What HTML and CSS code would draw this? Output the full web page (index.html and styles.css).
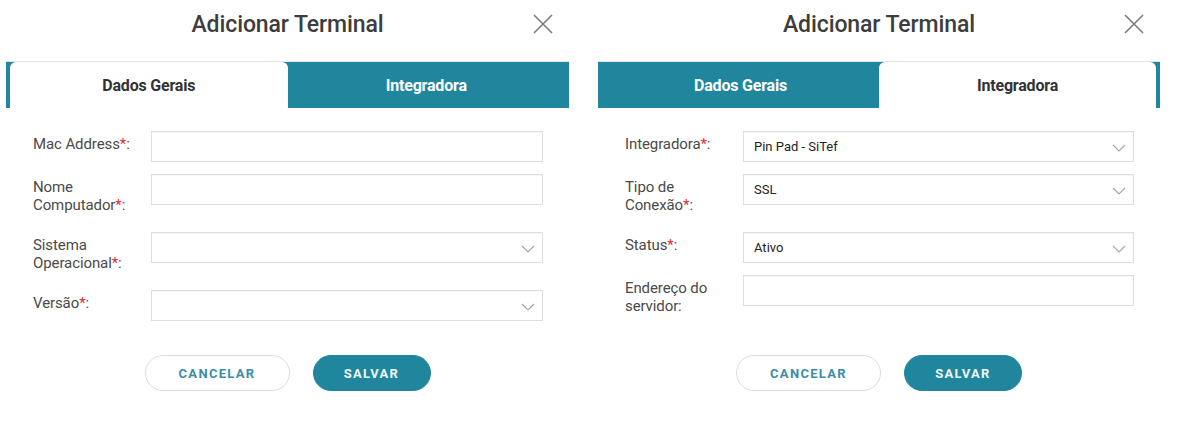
FILE: index.html
```html
<!DOCTYPE html>
<html lang="pt">
<head>
<meta charset="utf-8">
<link rel="stylesheet" href="styles.css">
</head>
<body>
<div class="page">
  <section class="dialog">
    <header class="dlg-head">
      <h1 class="dlg-title">Adicionar Terminal</h1>
      <button class="close" aria-label="Fechar"><svg width="20" height="20" viewBox="0 0 20 20"><path d="M1 1 L19 19 M19 1 L1 19" stroke="#7a7a7a" stroke-width="1.6" fill="none"/></svg></button>
    </header>
    <div class="tabs">
      <div class="tab active">Dados Gerais</div>
      <div class="tab">Integradora</div>
    </div>
    <form class="form">
      <div class="row"><label class="lbl">Mac Address<span class="req">*</span>:</label><div class="field"></div></div>
      <div class="row"><label class="lbl">Nome<br>Computador<span class="req">*</span>:</label><div class="field"></div></div>
      <div class="row"><label class="lbl">Sistema<br>Operacional<span class="req">*</span>:</label><div class="field select"><span class="val"></span><svg class="chev" width="14" height="8" viewBox="0 0 14 8"><path d="M1 1 L7 7 L13 1" stroke="#a8a8a8" stroke-width="1.2" fill="none"/></svg></div></div>
      <div class="row"><label class="lbl">Versão<span class="req">*</span>:</label><div class="field select"><span class="val"></span><svg class="chev" width="14" height="8" viewBox="0 0 14 8"><path d="M1 1 L7 7 L13 1" stroke="#a8a8a8" stroke-width="1.2" fill="none"/></svg></div></div>
    </form>
    <div class="actions">
      <button class="btn btn-outline">CANCELAR</button>
      <button class="btn btn-fill">SALVAR</button>
    </div>
  </section>

  <section class="dialog dialog-right">
    <header class="dlg-head">
      <h1 class="dlg-title">Adicionar Terminal</h1>
      <button class="close" aria-label="Fechar"><svg width="20" height="20" viewBox="0 0 20 20"><path d="M1 1 L19 19 M19 1 L1 19" stroke="#7a7a7a" stroke-width="1.6" fill="none"/></svg></button>
    </header>
    <div class="tabs">
      <div class="tab">Dados Gerais</div>
      <div class="tab active">Integradora</div>
    </div>
    <form class="form">
      <div class="row"><label class="lbl">Integradora<span class="req">*</span>:</label><div class="field select"><span class="val">Pin Pad - SiTef</span><svg class="chev" width="14" height="8" viewBox="0 0 14 8"><path d="M1 1 L7 7 L13 1" stroke="#a8a8a8" stroke-width="1.2" fill="none"/></svg></div></div>
      <div class="row"><label class="lbl">Tipo de<br>Conexão<span class="req">*</span>:</label><div class="field select"><span class="val">SSL</span><svg class="chev" width="14" height="8" viewBox="0 0 14 8"><path d="M1 1 L7 7 L13 1" stroke="#a8a8a8" stroke-width="1.2" fill="none"/></svg></div></div>
      <div class="row"><label class="lbl">Status<span class="req">*</span>:</label><div class="field select"><span class="val">Ativo</span><svg class="chev" width="14" height="8" viewBox="0 0 14 8"><path d="M1 1 L7 7 L13 1" stroke="#a8a8a8" stroke-width="1.2" fill="none"/></svg></div></div>
      <div class="row"><label class="lbl">Endereço do<br>servidor:</label><div class="field"></div></div>
    </form>
    <div class="actions">
      <button class="btn btn-outline">CANCELAR</button>
      <button class="btn btn-fill">SALVAR</button>
    </div>
  </section>
</div>
</body>
</html>
```

FILE: styles.css
```css
* { box-sizing: border-box; }
html, body { margin: 0; padding: 0; background: #fff; }
body { font-family: Roboto, "Liberation Sans", Arial, sans-serif; color: #444; }

.page {
  display: flex;
  gap: 29px;
  padding-left: 6px;
}

.dialog {
  width: 563px;
  display: flex;
  flex-direction: column;
}
.dialog-right { width: 562px; }

.dlg-head {
  height: 48px;
  display: flex;
  align-items: center;
  justify-content: center;
  position: relative;
  margin-bottom: 13px;
}
.dlg-title {
  margin: 0;
  font-size: 23px;
  font-weight: 500;
  color: #3d3d3d;
  letter-spacing: -0.1px;
}
.close {
  position: absolute;
  right: 16px;
  top: 14px;
  border: 0;
  background: none;
  padding: 0;
  width: 20px;
  height: 20px;
  line-height: 0;
}

.tabs {
  display: flex;
  background: #1f869e;
  padding: 0 4px;
  height: 47px;
  border-top: 1px solid #e4e4e4;
}
.tab {
  flex: 1;
  display: flex;
  align-items: center;
  justify-content: center;
  font-size: 16px;
  font-weight: 700;
  color: #fff;
  letter-spacing: -0.2px;
}
.tab.active {
  background: #fff;
  color: #333;
  border-radius: 6px 6px 0 0;
}

.form {
  padding: 23px 26px 0 27px;
  display: flex;
  flex-direction: column;
  gap: 12px;
}
.row {
  display: flex;
  align-items: flex-start;
}
.lbl {
  width: 118px;
  flex: none;
  font-size: 15px;
  line-height: 18px;
  letter-spacing: -0.1px;
  padding: 4px 0 6px;
  color: #4a4a4a;
}
.req { color: #e8282f; }

.field {
  flex: 1;
  height: 31px;
  border: 1px solid #dedede;
  box-shadow: inset 0 1px 1px rgba(0,0,0,0.04);
  display: flex;
  align-items: center;
  justify-content: space-between;
  padding: 0 7px 0 10px;
}
.val {
  font-size: 13px;
  color: #222;
}
.chev { flex: none; margin-top: 2px; }

.actions {
  display: flex;
  justify-content: center;
  gap: 23px;
  margin-top: 34px;
}
.btn {
  height: 36px;
  border-radius: 18px;
  font-family: Roboto, "Liberation Sans", Arial, sans-serif;
  font-size: 13px;
  font-weight: 700;
  letter-spacing: 1.3px;
  cursor: pointer;
}
.btn-outline {
  width: 145px;
  background: #fff;
  border: 1px solid #dcdcdc;
  color: #3a8ea6;
}
.btn-fill {
  width: 118px;
  background: #1f869e;
  border: 1px solid #1f869e;
  color: #eef6f8;
}
```
